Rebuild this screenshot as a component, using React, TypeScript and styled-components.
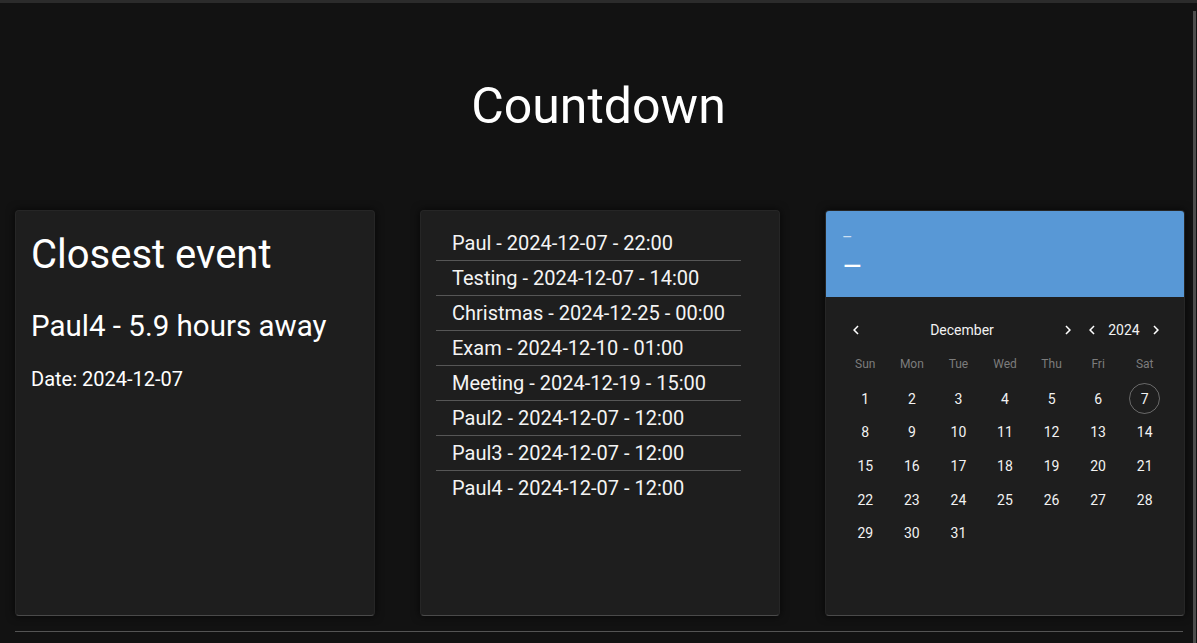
import React from "react";
import styled, { createGlobalStyle } from "styled-components";

type CountdownEvent = {
  name: string;
  date: string;
  time: string;
};

const events: CountdownEvent[] = [
  { name: "Paul", date: "2024-12-07", time: "22:00" },
  { name: "Testing", date: "2024-12-07", time: "14:00" },
  { name: "Christmas", date: "2024-12-25", time: "00:00" },
  { name: "Exam", date: "2024-12-10", time: "01:00" },
  { name: "Meeting", date: "2024-12-19", time: "15:00" },
  { name: "Paul2", date: "2024-12-07", time: "12:00" },
  { name: "Paul3", date: "2024-12-07", time: "12:00" },
  { name: "Paul4", date: "2024-12-07", time: "12:00" },
];

const weekDays = ["Sun", "Mon", "Tue", "Wed", "Thu", "Fri", "Sat"];

// December 2024 starts on a Sunday, so no leading blanks
const days = Array.from({ length: 31 }, (_, i) => i + 1);
const selectedDay = 7;

const ArrowLeft = () => (
  <svg width="18" height="18" viewBox="0 0 24 24" fill="currentColor">
    <path d="M15.41 16.59 10.83 12l4.58-4.59L14 6l-6 6 6 6z" />
  </svg>
);

const ArrowRight = () => (
  <svg width="18" height="18" viewBox="0 0 24 24" fill="currentColor">
    <path d="M8.59 16.59 13.17 12 8.59 7.41 10 6l6 6-6 6z" />
  </svg>
);

export default function App() {
  return (
    <>
      <GlobalStyle />
      <TopEdge />
      <Page>
        <Header>
          <Title>Countdown</Title>
        </Header>

        <CardRow>
          <Card>
            <ClosestBody>
              <CardTitle>Closest event</CardTitle>
              <Headline>Paul4 - 5.9 hours away</Headline>
              <DateText>Date: 2024-12-07</DateText>
            </ClosestBody>
          </Card>

          <Card>
            <EventList>
              {events.map((e, index) => (
                <EventItem key={index} $last={index === events.length - 1}>
                  {e.name} - {e.date} - {e.time}
                </EventItem>
              ))}
            </EventList>
          </Card>

          <Card>
            <PickerToolbar>
              <ToolbarOverline>–</ToolbarOverline>
              <ToolbarValue>–</ToolbarValue>
            </PickerToolbar>
            <CalendarBody>
              <NavRow>
                <NavGroup $grow>
                  <NavButton>
                    <ArrowLeft />
                  </NavButton>
                  <NavLabel $grow>December</NavLabel>
                  <NavButton>
                    <ArrowRight />
                  </NavButton>
                </NavGroup>
                <NavGroup>
                  <NavButton>
                    <ArrowLeft />
                  </NavButton>
                  <NavLabel>2024</NavLabel>
                  <NavButton>
                    <ArrowRight />
                  </NavButton>
                </NavGroup>
              </NavRow>

              <WeekRow>
                {weekDays.map((d) => (
                  <WeekDay key={d}>{d}</WeekDay>
                ))}
              </WeekRow>

              <DayGrid>
                {days.map((d) => (
                  <DayCell key={d}>
                    <Day $selected={d === selectedDay}>{d}</Day>
                  </DayCell>
                ))}
              </DayGrid>
            </CalendarBody>
          </Card>
        </CardRow>

        <FooterRule />
      </Page>
      <ScrollThumb />
    </>
  );
}

const GlobalStyle = createGlobalStyle`
  * {
    box-sizing: border-box;
  }
  html, body {
    margin: 0;
    padding: 0;
    background: #121212;
    color: #ffffff;
    font-family: Roboto, "Liberation Sans", Arial, sans-serif;
    overflow: hidden;
  }
`;

const TopEdge = styled.div`
  height: 3px;
  background: #2b2b2b;
`;

const ScrollThumb = styled.div`
  position: fixed;
  top: 11px;
  bottom: 0;
  right: 1px;
  width: 3px;
  background: #4d4d4d;
`;

const Page = styled.main`
  width: 1197px;
  min-height: 640px;
`;

const Header = styled.header`
  display: flex;
  justify-content: center;
  padding: 73px 0 74px;
`;

const Title = styled.h1`
  margin: 0;
  font-size: 50px;
  font-weight: 400;
  line-height: 60px;
  color: #ffffff;
`;

const CardRow = styled.section`
  display: flex;
  gap: 45px;
  padding-left: 15px;
`;

const Card = styled.div`
  flex: 0 0 360px;
  height: 406px;
  background: #1e1e1e;
  border: 1px solid #262626;
  border-bottom-color: #4a4a4a;
  border-radius: 4px;
  overflow: hidden;
  box-shadow: 0 0 8px rgba(0, 0, 0, 0.7);
  display: flex;
  flex-direction: column;
`;

const ClosestBody = styled.div`
  padding: 20px 15px;
  display: flex;
  flex-direction: column;
`;

const CardTitle = styled.h2`
  margin: 0;
  font-size: 40px;
  font-weight: 400;
  line-height: 48px;
`;

const Headline = styled.h3`
  margin: 29px 0 0;
  font-size: 29.5px;
  font-weight: 400;
  line-height: 36px;
`;

const DateText = styled.p`
  margin: 20px 0 0;
  font-size: 20px;
  line-height: 30px;
`;

const EventList = styled.ul`
  list-style: none;
  margin: 0;
  padding: 15px 0 0 15px;
  width: 320px;
`;

const EventItem = styled.li<{ $last?: boolean }>`
  padding: 2px 16px;
  font-size: 20px;
  line-height: 30px;
  color: #f4f4f4;
  border-bottom: 1px solid ${(p) => (p.$last ? "transparent" : "#565656")};
`;

const PickerToolbar = styled.div`
  height: 86px;
  background: #5898d6;
  padding: 17px 16px 0;
  display: flex;
  flex-direction: column;
`;

const ToolbarOverline = styled.span`
  font-size: 16px;
  line-height: 19px;
  color: rgba(255, 255, 255, 0.7);
`;

const ToolbarValue = styled.span`
  font-size: 32px;
  line-height: 38px;
  color: #ffffff;
`;

const CalendarBody = styled.div`
  padding: 17px 16px 0;
`;

const NavRow = styled.div`
  display: flex;
  align-items: center;
  height: 32px;
  padding-left: 2px;
`;

const NavGroup = styled.div<{ $grow?: boolean }>`
  display: flex;
  align-items: center;
  flex: ${(p) => (p.$grow ? 1 : "none")};
`;

const NavButton = styled.span`
  width: 24px;
  height: 24px;
  display: flex;
  align-items: center;
  justify-content: center;
  color: #ffffff;
`;

const NavLabel = styled.span<{ $grow?: boolean }>`
  flex: ${(p) => (p.$grow ? 1 : "none")};
  width: ${(p) => (p.$grow ? "auto" : "40px")};
  text-align: center;
  font-size: 14px;
  color: #f2f2f2;
`;

const WeekRow = styled.div`
  display: grid;
  grid-template-columns: repeat(7, 1fr);
  height: 28px;
  margin-top: 4px;
  align-items: center;
`;

const WeekDay = styled.span`
  text-align: center;
  font-size: 12px;
  color: #7c7c7c;
`;

const DayGrid = styled.div`
  display: grid;
  grid-template-columns: repeat(7, 1fr);
  grid-auto-rows: 33.6px;
  margin-top: 4px;
`;

const DayCell = styled.div`
  display: flex;
  align-items: center;
  justify-content: center;
`;

const Day = styled.span<{ $selected?: boolean }>`
  width: 31px;
  height: 31px;
  border-radius: 50%;
  display: flex;
  align-items: center;
  justify-content: center;
  font-size: 14px;
  color: #f2f2f2;
  border: 1px solid ${(p) => (p.$selected ? "rgba(255, 255, 255, 0.33)" : "transparent")};
`;

const FooterRule = styled.hr`
  margin: 15px 14px 0 15px;
  border: none;
  border-top: 1px solid #545454;
`;
